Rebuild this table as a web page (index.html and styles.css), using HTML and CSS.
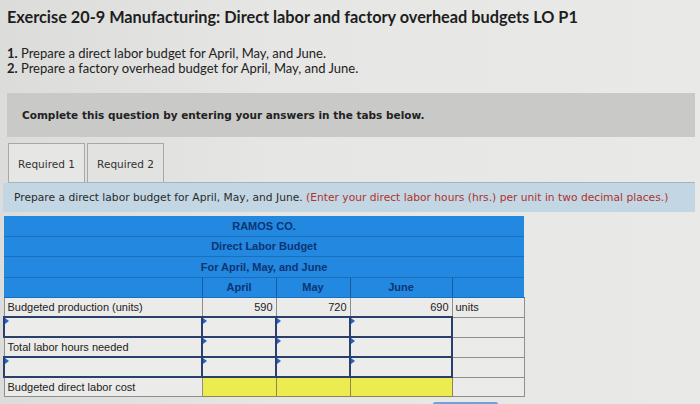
FILE: index.html
```html
<!DOCTYPE html>
<html>
<head>
<meta charset="utf-8">
<link rel="stylesheet" href="styles.css">
</head>
<body>
<div class="page">
  <h1 class="title">Exercise 20-9 Manufacturing: Direct labor and factory overhead budgets LO P1</h1>
  <ol class="tasks">
    <li><b>1.</b> Prepare a direct labor budget for April, May, and June.</li>
    <li><b>2.</b> Prepare a factory overhead budget for April, May, and June.</li>
  </ol>
  <div class="band">Complete this question by entering your answers in the tabs below.</div>
  <div class="tabs">
    <div class="tab active">Required 1</div>
    <div class="tab">Required 2</div>
  </div>
  <div class="instr"><p>Prepare a direct labor budget for April, May, and June. <span class="red">(Enter your direct labor hours (hrs.) per unit in two decimal places.)</span></p></div>
  <table class="budget">
    <colgroup>
      <col class="c-label"><col class="c-m"><col class="c-m"><col class="c-j"><col class="c-u">
    </colgroup>
    <tr class="hd"><th colspan="5">RAMOS CO.</th></tr>
    <tr class="hd"><th colspan="5">Direct Labor Budget</th></tr>
    <tr class="hd"><th colspan="5">For April, May, and June</th></tr>
    <tr class="hd months"><th class="blank"></th><th>April</th><th>May</th><th>June</th><th class="blank"></th></tr>
    <tr><td class="lbl">Budgeted production (units)</td><td class="num">590</td><td class="num">720</td><td class="num">690</td><td class="unit">units</td></tr>
    <tr class="inrow"><td class="lbl in"></td><td class="in"></td><td class="in"></td><td class="in"></td><td class="unit"></td></tr>
    <tr><td class="lbl">Total labor hours needed</td><td class="in"></td><td class="in"></td><td class="in"></td><td class="unit"></td></tr>
    <tr class="inrow"><td class="lbl in"></td><td class="in"></td><td class="in"></td><td class="in"></td><td class="unit"></td></tr>
    <tr><td class="lbl">Budgeted direct labor cost</td><td class="yel"></td><td class="yel"></td><td class="yel"></td><td class="unit"></td></tr>
  </table>
  <div class="btnrow"><div class="btn"></div></div>
</div>
</body>
</html>
```
FILE: styles.css
```css
html, body { margin: 0; padding: 0; }
body {
  width: 700px;
  height: 404px;
  overflow: hidden;
  background: linear-gradient(90deg, #dcdcda 0%, #e6e6e4 40%, #e9e9e7 100%);
  font-family: "Liberation Sans", Arial, sans-serif;
  color: #222;
}
.page { padding: 7px 5px 0 3px; }
.title {
  margin: 0 0 0 4px;
  font-family: Lato, "Open Sans", sans-serif;
  font-weight: 700;
  font-size: 16.3px;
  line-height: 20px;
  color: #1e1e1e;
}
.tasks {
  list-style: none;
  margin: 19px 0 0 4px;
  padding: 0;
  font-family: Lato, sans-serif;
  font-size: 13px;
  line-height: 15px;
  color: #222;
}
.band {
  margin: 17px 0 0 4px;
  height: 44px;
  display: flex;
  align-items: center;
  padding-left: 15px;
  background: #c9c9c7;
  font-family: "DejaVu Sans", Verdana, sans-serif;
  font-weight: 700;
  font-size: 10.5px;
  color: #222;
}
.tabs {
  display: flex;
  margin: 6px 0 0 5px;
  gap: 2px;
  border-bottom: 1px solid #a9b4b8;
}
.tab {
  width: 77px;
  height: 39px;
  box-sizing: border-box;
  border: 1px solid #a5aaa8;
  border-bottom: none;
  display: flex;
  align-items: center;
  justify-content: center;
  padding-top: 1px;
  font-family: "DejaVu Sans", Verdana, sans-serif;
  font-size: 10.5px;
  color: #333;
  background: #e2e2e0;
}
.tab.active { background: #e6e6e4; }
.instr {
  height: 29px;
  display: flex;
  align-items: center;
  padding-left: 11px;
  background: #c3d6e3;
  font-family: "DejaVu Sans", Verdana, sans-serif;
  font-size: 10.7px;
  color: #2a2a2a;
  white-space: nowrap;
}
.instr p { margin: 0; }
.red { color: #b0322a; }
.budget {
  margin-top: 4px;
  border-collapse: collapse;
  table-layout: fixed;
  width: 520px;
  font-size: 11px;
}
.c-label { width: 198px; }
.c-m { width: 74px; }
.c-j { width: 102px; }
.c-u { width: 72px; }
.hd th {
  background: #2288e0;
  color: #0d3473;
  font-weight: 700;
  height: 19.5px;
  padding: 0;
  text-align: center;
  border-bottom: 1px solid #1a6fbd;
}
.months th { border-left: 1px solid #1d5a9a; }
.months th.blank:first-child { border-left: none; }
td {
  height: 18px;
  padding: 0 3px;
  border: 1px solid #8e8e8e;
  background: #ebebe9;
  color: #222;
  position: relative;
}
td.num { text-align: right; }
td.unit { padding-left: 3px; }
td.in {
  border: 2px solid #2b3f6b;
  background: #ecedeb;
}
td.in::before {
  content: "";
  position: absolute;
  left: 0;
  top: 0;
  border-top: 3px solid transparent;
  border-bottom: 3px solid transparent;
  border-left: 4px solid #1f64c8;
}
td.yel {
  background: #ecec50;
  border: 1px solid #8a8a50;
}
.btnrow { display: flex; padding-left: 430px; margin-top: 5px; }
.btn { width: 65px; height: 6px; background: #6ea2d8; border-radius: 2px 2px 0 0; }
```
